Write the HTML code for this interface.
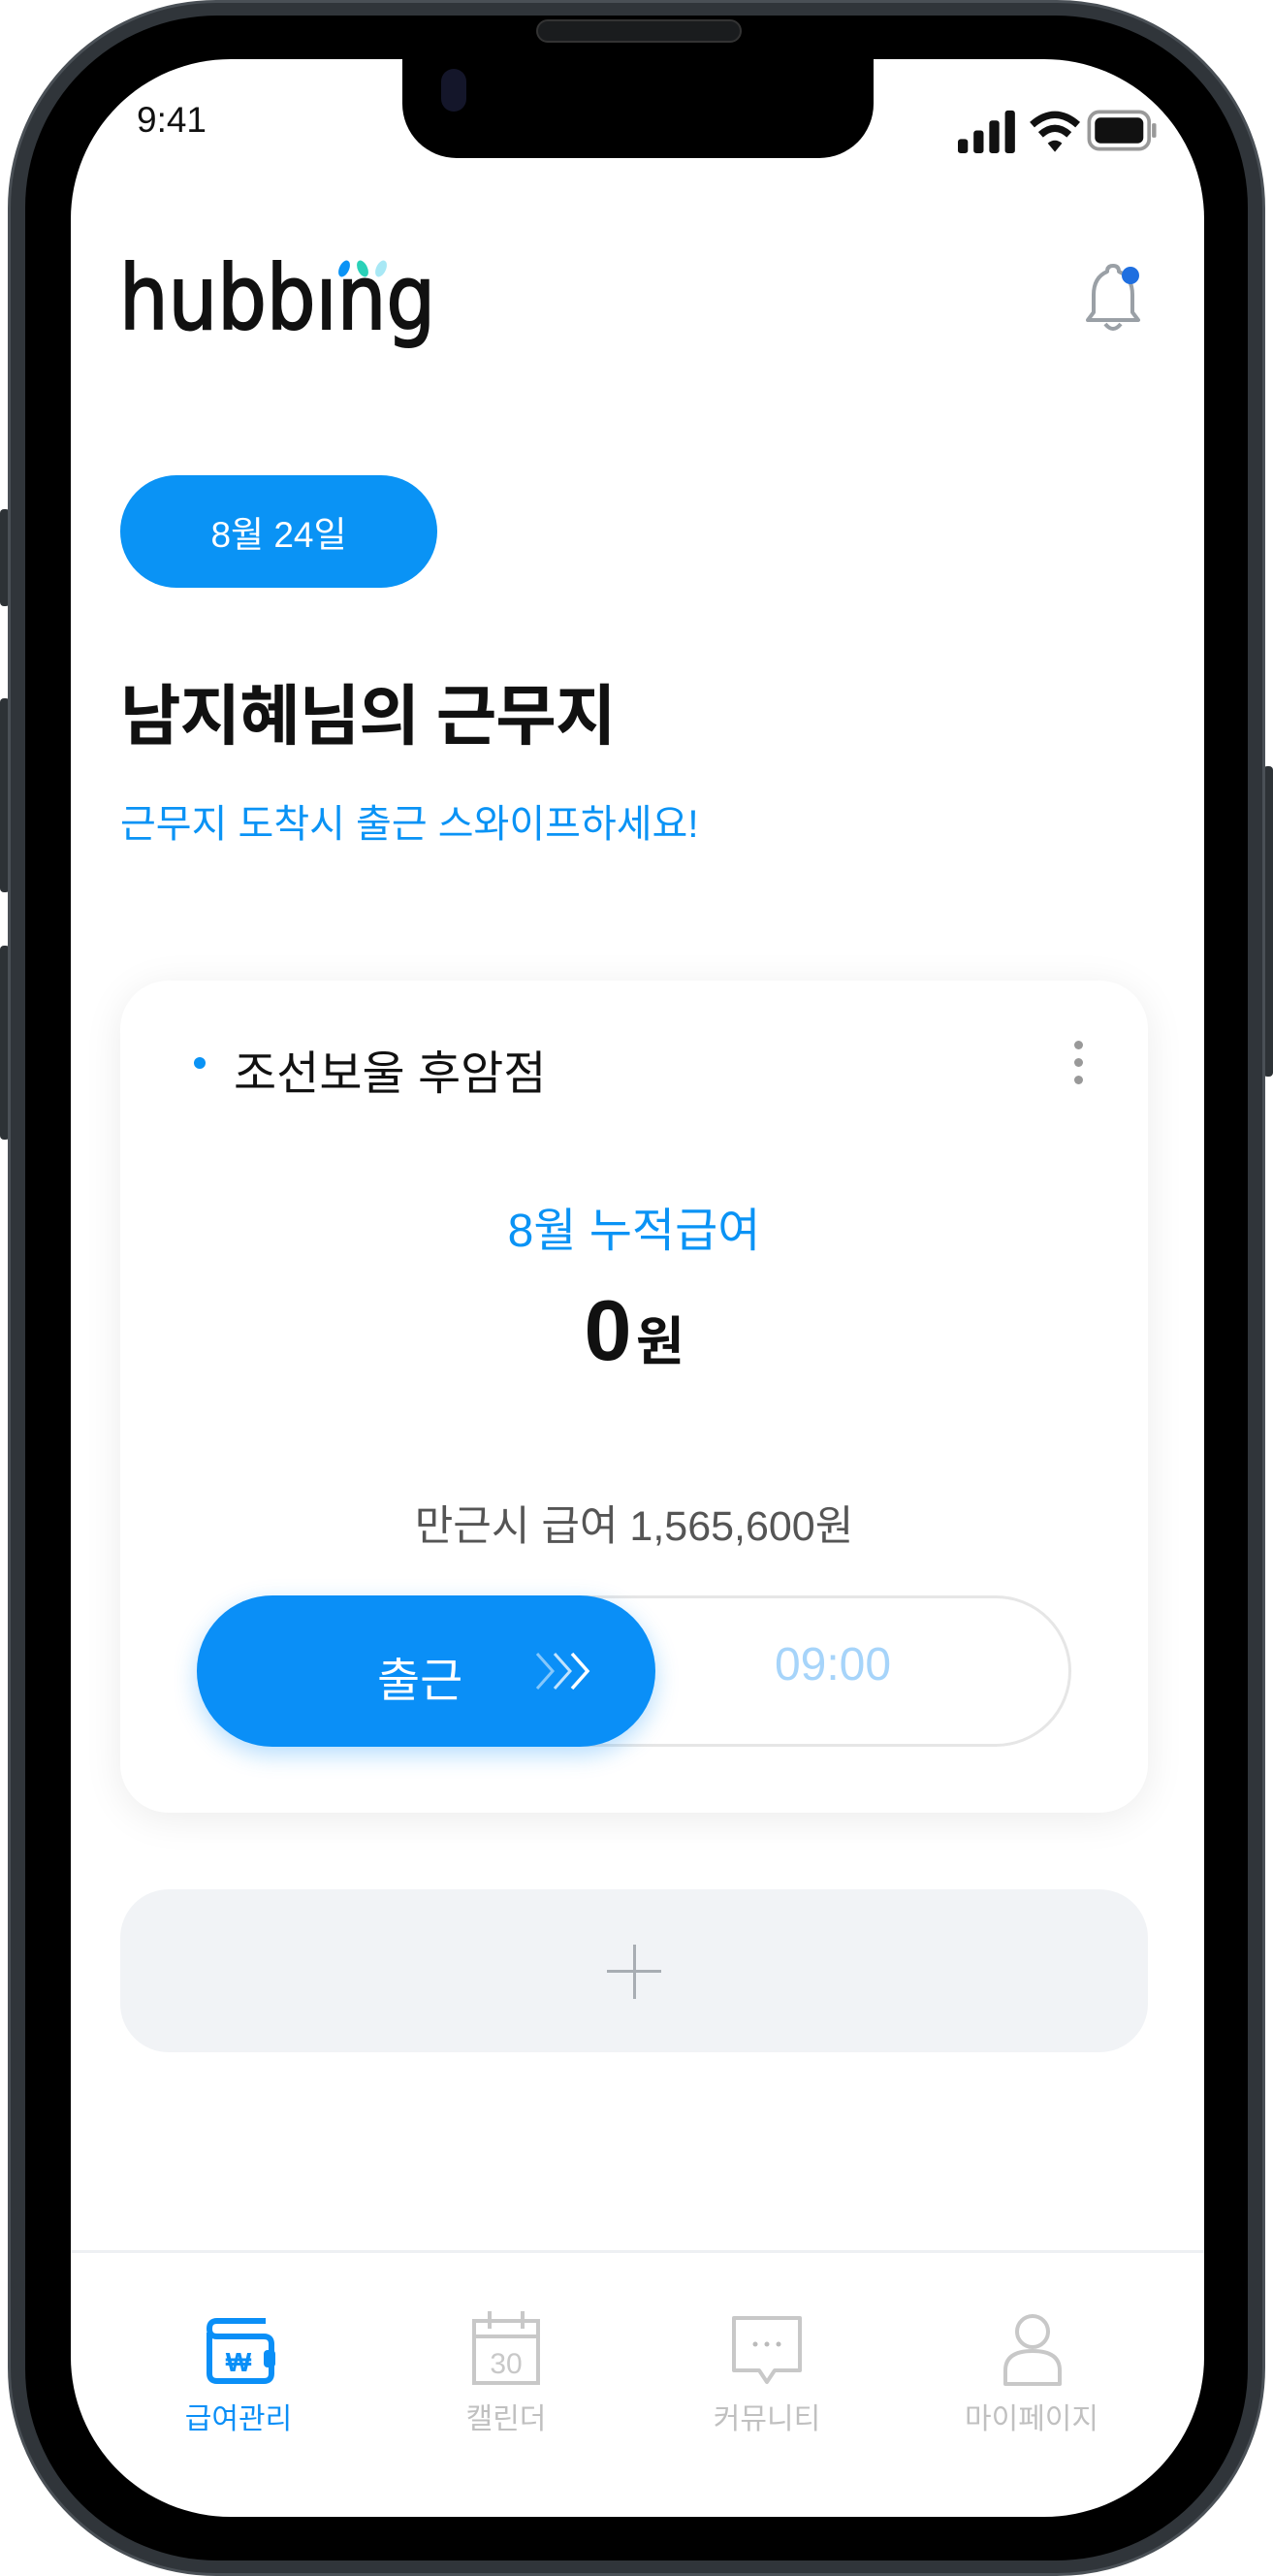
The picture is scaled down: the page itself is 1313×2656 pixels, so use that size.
<!DOCTYPE html>
<html><head><meta charset="utf-8">
<style>
*{margin:0;padding:0;box-sizing:border-box}
body{width:1313px;height:2656px;background:#fff;position:relative;overflow:hidden;font-family:"Liberation Sans","Noto Sans CJK KR",sans-serif}
.abs{position:absolute}
.body{left:8px;top:0;width:1297px;height:2656px;border-radius:215px;background:#30353a;border:3px solid #4a5056}
.bezel{left:26px;top:16px;width:1261px;height:2624px;border-radius:198px;background:#000;}
.screen{left:73px;top:61px;width:1169px;height:2534px;border-radius:165px;background:#fff;overflow:hidden}
.notch{left:342px;top:-10px;width:486px;height:112px;background:#000;border-radius:0 0 56px 56px}
.btn{background:#2d3236;width:10px;left:0}
</style></head><body>
<div class="abs btn" style="top:525px;height:100px;border-radius:4px"></div>
<div class="abs btn" style="top:720px;height:200px;border-radius:4px"></div>
<div class="abs btn" style="top:975px;height:200px;border-radius:4px"></div>
<div class="abs btn" style="left:1303px;top:790px;height:320px;border-radius:4px"></div>
<div class="abs body"></div>
<div class="abs bezel"></div>
<div class="abs" style="left:553px;top:20px;width:212px;height:24px;border-radius:12px;background:#1a1c1e;border:2px solid #333"></div>
<div class="abs screen">
  <div class="abs notch"></div>
  <div class="abs" style="left:382px;top:10px;width:26px;height:44px;border-radius:13px;background:#14162a"></div>
  <div class="abs" style="left:68px;top:42px;font-size:37px;color:#111">9:41</div>
  <!-- status icons -->
  <svg class="abs" style="left:915px;top:47px" width="206" height="53" viewBox="0 0 140 36">
    <rect x="0" y="24" width="7" height="10" rx="2" fill="#111"/>
    <rect x="11" y="18" width="7" height="16" rx="2" fill="#111"/>
    <rect x="22" y="11" width="7" height="23" rx="2" fill="#111"/>
    <rect x="33" y="4" width="7" height="30" rx="2" fill="#111"/>
    <path d="M52 14 Q68 0 84 14" stroke="#111" stroke-width="5" fill="none"/>
    <path d="M58 21 Q68 12 78 21" stroke="#111" stroke-width="5" fill="none"/>
    <path d="M63 27 L68 33 L73 27 Q68 23 63 27Z" fill="#111"/>
    <rect x="92" y="5" width="42" height="26" rx="7" fill="none" stroke="#999" stroke-width="2.5"/>
    <rect x="96" y="9" width="34" height="18" rx="4" fill="#111"/>
    <rect x="136" y="13" width="3" height="10" rx="1" fill="#999"/>
  </svg>
  <!-- logo -->
  <svg class="abs" style="left:48px;top:190px" width="360" height="140" viewBox="0 0 360 140">
    <text x="2" y="88" font-size="92" textLength="326" lengthAdjust="spacingAndGlyphs" fill="#111" stroke="#111" stroke-width="2" font-family="DejaVu Sans,sans-serif">hubbıng</text>
    <ellipse cx="234" cy="26" rx="5" ry="9" transform="rotate(25 234 26)" fill="#0a93f5"/>
    <ellipse cx="253" cy="26" rx="5" ry="9" transform="rotate(-25 253 26)" fill="#2ad1b8"/>
    <ellipse cx="272" cy="26" rx="5" ry="9" transform="rotate(25 272 26)" fill="#a8e8f5"/>
  </svg>
  <!-- bell -->
  <svg class="abs" style="left:1035px;top:205px" width="80" height="80" viewBox="0 0 80 80">
    <path d="M34 14 Q34 8 40 8 Q46 8 46 14 Q60 20 60 38 L60 56 L66 64 L14 64 L20 56 L20 38 Q20 20 34 14Z" fill="none" stroke="#9aa0a6" stroke-width="4" stroke-linejoin="round"/>
    <path d="M32 68 Q40 78 48 68" fill="none" stroke="#9aa0a6" stroke-width="4"/>
    <circle cx="58" cy="18" r="9" fill="#1f6fe0"/>
  </svg>
  <!-- date pill -->
  <div class="abs" style="left:51px;top:429px;width:327px;height:116px;border-radius:58px;background:#0a93f5;color:#fff;font-size:37px;display:flex;align-items:center;justify-content:center">8월 24일</div>
  <div class="abs" style="left:51px;top:622px;font-size:68px;font-weight:700;color:#111;letter-spacing:-1px">남지혜님의 근무지</div>
  <div class="abs" style="left:51px;top:756px;font-size:40px;color:#0a93f5">근무지 도착시 출근 스와이프하세요!</div>
  <!-- card -->
  <div class="abs" style="left:51px;top:950px;width:1060px;height:858px;border-radius:50px;background:#fff;box-shadow:0 6px 40px rgba(0,0,0,0.08)">
    <div class="abs" style="left:76px;top:79px;width:12px;height:12px;border-radius:6px;background:#0a93f5"></div>
    <div class="abs" style="left:117px;top:56px;font-size:48px;color:#111">조선보울 후암점</div>
    <div class="abs" style="left:984px;top:62px;width:9px">
      <div style="width:9px;height:9px;border-radius:5px;background:#999;margin-bottom:9px"></div>
      <div style="width:9px;height:9px;border-radius:5px;background:#999;margin-bottom:9px"></div>
      <div style="width:9px;height:9px;border-radius:5px;background:#999"></div>
    </div>
    <div class="abs" style="left:0;width:1060px;top:218px;text-align:center;font-size:48px;color:#0a93f5">8월 누적급여</div>
    <div class="abs" style="left:0;width:1060px;top:310px;text-align:center;color:#111;font-weight:700"><span style="font-size:88px">0</span> <span style="font-size:54px">원</span></div>
    <div class="abs" style="left:0;width:1060px;top:528px;text-align:center;font-size:43px;color:#555">만근시 급여 1,565,600원</div>
    <div class="abs" style="left:79px;top:634px;width:902px;height:156px;border-radius:78px;border:3px solid #e6e6e6;background:#fff"></div>
    <div class="abs" style="left:635px;top:678px;width:200px;text-align:center;font-size:48px;color:#a6d4fa">09:00</div>
    <div class="abs" style="left:79px;top:634px;width:473px;height:156px;border-radius:78px;background:#0a8ff7;box-shadow:0 8px 24px rgba(10,143,247,0.3)">
      <div class="abs" style="left:186px;top:48px;font-size:48px;color:#fff">출근</div>
      <svg class="abs" style="left:344px;top:56px" width="70" height="44" viewBox="0 0 64 44">
        <path d="M4 4 L20 22 L4 40" stroke="rgba(255,255,255,0.5)" stroke-width="3" fill="none"/>
        <path d="M22 4 L38 22 L22 40" stroke="rgba(255,255,255,0.75)" stroke-width="3" fill="none"/>
        <path d="M40 4 L56 22 L40 40" stroke="#fff" stroke-width="3.5" fill="none"/>
      </svg>
    </div>
  </div>
  <!-- add box -->
  <div class="abs" style="left:51px;top:1887px;width:1060px;height:168px;border-radius:50px;background:#f1f3f6"></div>
  <div class="abs" style="left:553px;top:1970px;width:56px;height:3px;background:#a8adb3"></div>
  <div class="abs" style="left:580px;top:1944px;width:3px;height:56px;background:#a8adb3"></div>
  <!-- nav -->
  <div class="abs" style="left:0;top:2259px;width:1169px;height:3px;background:#eef0f3"></div>
  <svg class="abs" style="left:137px;top:2326px" width="76" height="74" viewBox="0 0 76 74">
    <path d="M64 6 L14 6 Q6 6 6 14 Q6 22 14 22 L62 22 Q70 22 70 30 L70 60 Q70 68 62 68 L14 68 Q6 68 6 60 L6 18" fill="none" stroke="#0a8ff7" stroke-width="6"/>
    <text x="36" y="58" font-size="28" font-weight="700" fill="#0a8ff7" text-anchor="middle" font-family="Liberation Sans,Noto Sans CJK KR,sans-serif">₩</text>
    <rect x="62" y="36" width="12" height="18" rx="4" fill="#0a8ff7"/>
  </svg>
  <svg class="abs" style="left:412px;top:2318px" width="74" height="82" viewBox="0 0 74 82">
    <rect x="4" y="14" width="66" height="64" fill="none" stroke="#c8c8c8" stroke-width="4"/>
    <line x1="4" y1="30" x2="70" y2="30" stroke="#c8c8c8" stroke-width="4"/>
    <line x1="20" y1="4" x2="20" y2="22" stroke="#c8c8c8" stroke-width="4"/>
    <line x1="54" y1="4" x2="54" y2="22" stroke="#c8c8c8" stroke-width="4"/>
    <text x="37" y="68" font-size="30" fill="#c8c8c8" text-anchor="middle" font-family="Liberation Sans,sans-serif">30</text>
  </svg>
  <svg class="abs" style="left:680px;top:2325px" width="76" height="80" viewBox="0 0 76 80">
    <path d="M4 4 L72 4 L72 58 L46 58 L38 70 L30 58 L4 58 Z" fill="none" stroke="#c8c8c8" stroke-width="4" stroke-linejoin="round"/>
    <circle cx="26" cy="31" r="2.5" fill="#bbb"/><circle cx="38" cy="31" r="2.5" fill="#bbb"/><circle cx="50" cy="31" r="2.5" fill="#bbb"/>
  </svg>
  <svg class="abs" style="left:960px;top:2323px" width="64" height="78" viewBox="0 0 64 78">
    <circle cx="32" cy="20" r="16" fill="none" stroke="#c8c8c8" stroke-width="4"/>
    <path d="M4 74 L4 60 Q4 40 32 40 Q60 40 60 60 L60 74 Z" fill="none" stroke="#c8c8c8" stroke-width="4" stroke-linejoin="round"/>
  </svg>
  <div class="abs" style="left:73px;width:200px;top:2408px;text-align:center;font-size:30px;color:#0a8ff7">급여관리</div>
  <div class="abs" style="left:349px;width:200px;top:2408px;text-align:center;font-size:30px;color:#c0c0c0">캘린더</div>
  <div class="abs" style="left:618px;width:200px;top:2408px;text-align:center;font-size:30px;color:#c0c0c0">커뮤니티</div>
  <div class="abs" style="left:891px;width:200px;top:2408px;text-align:center;font-size:30px;color:#c0c0c0">마이페이지</div>
</div>
</body></html>
